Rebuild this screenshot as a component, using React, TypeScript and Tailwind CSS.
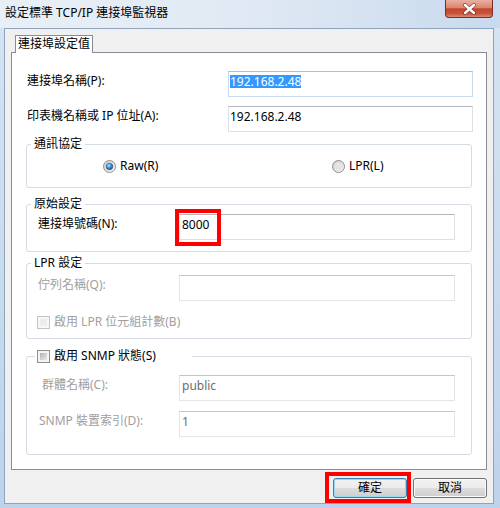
import type { ReactNode } from "react"

// Win7 style "Configure Standard TCP/IP Port Monitor" dialog

const Radio = ({ checked }: { checked?: boolean }) => {
  const id = checked ? "radio-on" : "radio-off"
  return (
    <svg width="13" height="13" viewBox="0 0 13 13" className="shrink-0">
      <defs>
        <linearGradient id={`${id}-ring`} x1="0" y1="0" x2="1" y2="1">
          <stop offset="0" stopColor="#c9c9c9" />
          <stop offset="1" stopColor="#fafafa" />
        </linearGradient>
        <radialGradient id={`${id}-dot`} cx="0.4" cy="0.35" r="0.75">
          <stop offset="0" stopColor="#c4e8fd" />
          <stop offset="0.45" stopColor="#3f93d8" />
          <stop offset="1" stopColor="#173f6b" />
        </radialGradient>
      </defs>
      <circle cx="6.5" cy="6.5" r="6" fill={`url(#${id}-ring)`} stroke="#8e8f8f" />
      {checked ? (
        <circle cx="6.5" cy="6.5" r="3.3" fill={`url(#${id}-dot)`} stroke="#2a5b88" strokeWidth="0.6" />
      ) : (
        <circle cx="6.5" cy="6.5" r="4" fill="#e4e4e4" />
      )}
    </svg>
  )
}

const Check = ({ disabled }: { disabled?: boolean }) => {
  if (disabled)
    return (
      <span className="block w-[13px] h-[13px] shrink-0 border border-[#c4c4c4] bg-[#f7f7f7] p-[2px]">
        <span className="block w-full h-full bg-[#ececec]" />
      </span>
    )
  return (
    <span className="block w-[13px] h-[13px] shrink-0 border border-[#8e8f8f] bg-[#f4f4f4] p-[2px]">
      <span className="block w-full h-full bg-linear-to-br from-[#aeb2b8] to-[#ececec]" />
    </span>
  )
}

interface FieldProps {
  className: string
  children?: ReactNode
  disabled?: boolean
}

const Field = ({ className, children, disabled }: FieldProps) => (
  <div
    className={`relative shrink-0 h-[26px] border bg-white pt-[3px] leading-[14px] whitespace-nowrap ${
      disabled ? "text-[#6d6d6d]" : "text-black"
    } ${className}`}
  >
    {children}
  </div>
)

const Group = ({ legend, children, className }: { legend: ReactNode; children: ReactNode; className: string }) => (
  <div className={`mx-[14px] border border-[#d5dbe2] rounded-[3px] ${className}`}>
    {legend}
    {children}
  </div>
)

const Button = ({ label, primary, children }: { label: string; primary?: boolean; children?: ReactNode }) => (
  <div className="relative">
    <div
      className={`w-[74px] h-[20px] flex items-center justify-center rounded-[3px] border bg-[linear-gradient(#f2f2f2,#ebebeb_50%,#dddddd_50%,#cfcfcf)] ${
        primary
          ? "border-[#3c7fb1] shadow-[inset_0_0_0_1px_#9fd7f2]"
          : "border-[#707070] shadow-[inset_0_0_0_1px_#fbfbfb]"
      }`}
    >
      {label}
    </div>
    {children}
  </div>
)

export default function App() {
  return (
    <div className="w-[500px] h-[508px] flex flex-col bg-linear-to-b from-[#d6e4f2] to-[#bdd3eb] text-[12px] leading-[16px] text-black font-['Noto_Sans','Noto_Sans_CJK_TC',sans-serif]">
      {/* title bar */}
      <div className="h-[28px] shrink-0 flex items-start bg-linear-to-r from-[#e9eff6] via-[#e0e9f3] to-[#c8daee]">
        <div className="flex-1 pl-[5px] pt-[5px]">設定標準 TCP/IP 連接埠監視器</div>
        <div className="mr-[7px] w-[48px] h-[18px] flex items-center justify-center rounded-b-[4px] border border-t-0 border-[#7c2e20] bg-[linear-gradient(#eab0a2,#d98571_45%,#c4452b_52%,#c9533a_80%,#dc8a74)]">
          <svg width="15" height="12" viewBox="0 0 15 12">
            <path d="M3 2 L12 10 M12 2 L3 10" stroke="#5a1a10" strokeWidth="4" strokeLinecap="round" opacity="0.55" />
            <path d="M3 2 L12 10 M12 2 L3 10" stroke="#ffffff" strokeWidth="2.4" strokeLinecap="round" />
          </svg>
        </div>
      </div>

      {/* client area */}
      <div className="flex-1 ml-[4px] mr-[6px] mb-[4px] border border-[#8ea4be] bg-[#f0f0f0] flex flex-col">
        <div className="relative z-10 mt-[6px] ml-[10px] -mb-[1px] w-[78px] h-[18px] border-x border-t border-[#898c95] bg-white text-center">
          連接埠設定值
        </div>

        <div className="mx-[6px] border border-[#898c95] bg-white flex flex-col pb-[14px]">
          <div className="mt-[18px] flex items-start pl-[15px] pr-[13px]">
            <div className="flex-1 pt-[2px]">連接埠名稱(P):</div>
            <Field className="w-[245px] pl-[1px] border-[#c8dcee] border-t-[#a4c0dc]">
              <span className="inline-block h-[13px] leading-[13px] bg-[#3399ff] text-white">192.168.2.48</span>
            </Field>
          </div>
          <div className="mt-[9px] flex items-start pl-[15px] pr-[13px]">
            <div className="flex-1 pt-[2px]">印表機名稱或 IP 位址(A):</div>
            <Field className="w-[245px] pl-[1px] border-[#dde1e7] border-t-[#b4b7bd]">192.168.2.48</Field>
          </div>

          <Group
            className="mt-[12px] pb-[13px]"
            legend={<div className="-mt-[9px] ml-[4px] w-fit px-[3px] bg-white">通訊協定</div>}
          >
            <div className="mt-[6px] flex items-center">
              <div className="w-[305px] pl-[76px] flex items-center gap-[4px]">
                <Radio checked />
                <span>Raw(R)</span>
              </div>
              <div className="flex items-center gap-[4px]">
                <Radio />
                <span>LPR(L)</span>
              </div>
            </div>
          </Group>

          <Group
            className="mt-[16px] pb-[11px]"
            legend={<div className="-mt-[9px] ml-[4px] w-fit px-[3px] bg-white">原始設定</div>}
          >
            <div className="mt-[2px] flex items-start">
              <div className="flex-1 pl-[11px] pt-[2px]">連接埠號碼(N):</div>
              <Field className="w-[276px] mr-[16px] pl-[2px] border-[#dde1e7] border-t-[#b4b7bd]">
                8000
                <div className="absolute left-[-5px] top-[-6px] w-[46px] h-[37px] border-[4px] border-[#ff0000]" />
              </Field>
            </div>
          </Group>

          <Group
            className="mt-[11px] pb-[8px]"
            legend={<div className="-mt-[9px] ml-[4px] w-fit px-[3px] bg-white">LPR 設定</div>}
          >
            <div className="mt-[4px] flex items-start">
              <div className="flex-1 pl-[11px] pt-[2px] text-[#a0a0a0]">佇列名稱(Q):</div>
              <Field disabled className="w-[276px] mr-[16px] pl-[2px] border-[#e3e5e9] border-t-[#c3c5c9]" />
            </div>
            <div className="mt-[13px] pl-[10px] flex items-center gap-[4px] text-[#a0a0a0]">
              <Check disabled />
              <span>啟用 LPR 位元組計數(B)</span>
            </div>
          </Group>

          <Group
            className="mt-[17px] pb-[17px]"
            legend={
              <div className="-mt-[9px] ml-[8px] w-[157px] pl-[2px] flex items-center gap-[4px] bg-white">
                <Check />
                <span>啟用 SNMP 狀態(S)</span>
              </div>
            }
          >
            <div className="mt-[11px] flex items-start">
              <div className="flex-1 pl-[15px] pt-[2px] text-[#a0a0a0]">群體名稱(C):</div>
              <Field disabled className="w-[276px] mr-[16px] pl-[2px] border-[#e3e5e9] border-t-[#c3c5c9]">
                public
              </Field>
            </div>
            <div className="mt-[10px] flex items-start">
              <div className="flex-1 pl-[12px] pt-[2px] text-[#a0a0a0]">SNMP 裝置索引(D):</div>
              <Field disabled className="w-[276px] mr-[16px] pl-[2px] border-[#e3e5e9] border-t-[#c3c5c9]">
                1
              </Field>
            </div>
          </Group>
        </div>

        <div className="mt-[8px] mr-[6px] flex justify-end gap-[6px]">
          <Button label="確定" primary>
            <div className="absolute left-[-8px] top-[-6px] w-[86px] h-[31px] border-[4px] border-[#ff0000]" />
          </Button>
          <Button label="取消" />
        </div>
      </div>
    </div>
  )
}
